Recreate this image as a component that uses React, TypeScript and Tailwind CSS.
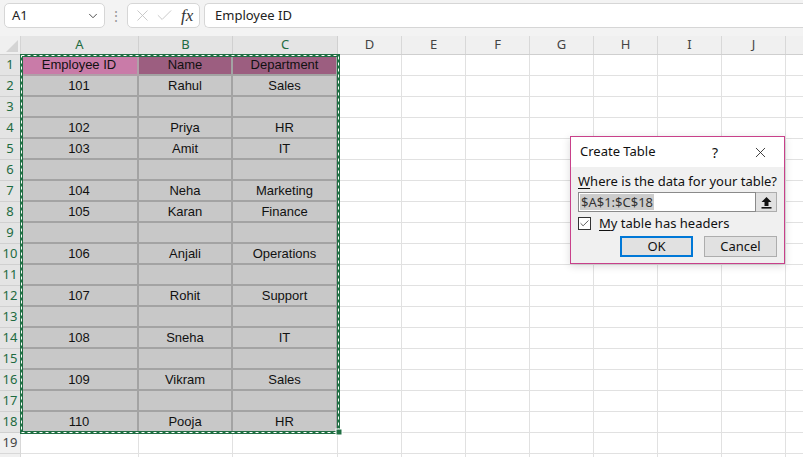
import { ChevronDown, X, Check } from "lucide-react";

type Row = { id?: string; name?: string; dept?: string; header?: boolean };

const rows: Row[] = [
  { id: "Employee ID", name: "Name", dept: "Department", header: true },
  { id: "101", name: "Rahul", dept: "Sales" },
  {},
  { id: "102", name: "Priya", dept: "HR" },
  { id: "103", name: "Amit", dept: "IT" },
  {},
  { id: "104", name: "Neha", dept: "Marketing" },
  { id: "105", name: "Karan", dept: "Finance" },
  {},
  { id: "106", name: "Anjali", dept: "Operations" },
  {},
  { id: "107", name: "Rohit", dept: "Support" },
  {},
  { id: "108", name: "Sneha", dept: "IT" },
  {},
  { id: "109", name: "Vikram", dept: "Sales" },
  {},
  { id: "110", name: "Pooja", dept: "HR" },
  {},
  {},
];

const dataCols = [
  { key: "A", w: "w-[118px]" },
  { key: "B", w: "w-[94px]" },
  { key: "C", w: "w-[105px]" },
];
// K is only partly in view, its letter sits off-screen
const emptyCols = ["D", "E", "F", "G", "H", "I", "J", ""];

const cellFont = { fontFamily: "'Liberation Sans', Arial, sans-serif" };

export default function App() {
  return (
    <div
      className="w-[803px] h-[457px] overflow-hidden bg-white relative text-[#222]"
      style={{ fontFamily: "'Noto Sans', 'Open Sans', sans-serif" }}
    >
      {/* ---------- FORMULA BAR ---------- */}
      <div className="h-[36px] bg-[#f3f3f3] flex items-start pt-[3px] pl-[4px]">
        <div className="w-[101px] h-[25px] bg-white border border-[#d6d6d6] rounded-[5px] flex items-center justify-between pl-[7px] pr-[4px]">
          <span className="text-[13px]">A1</span>
          <ChevronDown size={14} strokeWidth={1.6} className="text-[#444]" />
        </div>
        <div className="w-[22px] h-[25px] flex items-center justify-center text-[#9a9a9a] text-[14px]">⋮</div>
        <div className="w-[73px] h-[25px] bg-white border border-[#d6d6d6] rounded-[5px] flex items-center pl-[5px] gap-[3px]">
          <X size={19} strokeWidth={1.1} className="text-[#c2c2c2]" />
          <Check size={19} strokeWidth={1.1} className="text-[#c2c2c2]" />
          <span
            className="italic text-[17px] text-[#333] ml-[4px] leading-none"
            style={{ fontFamily: "'Liberation Serif', 'DejaVu Serif', serif" }}
          >
            fx
          </span>
        </div>
        <div className="flex-1 h-[25px] ml-[4px] bg-white border border-[#d6d6d6] border-r-0 rounded-l-[5px] flex items-center pl-[10px]">
          <span className="text-[13px]">Employee ID</span>
        </div>
      </div>

      {/* ---------- GRID ---------- */}
      <div className="relative">
        {/* column headers */}
        <div className="flex h-[19px] bg-[#f0f0f0] border-b border-[#cfcfcf]">
          <div className="w-[21px] shrink-0 border-r border-[#d4d4d4] relative">
            <div className="absolute right-[2px] bottom-[2px] w-0 h-0 border-l-[12px] border-l-transparent border-b-[12px] border-b-[#d4d4d4]" />
          </div>
          {dataCols.map((c) => (
            <div
              key={c.key}
              className={`${c.w} shrink-0 bg-[#e4e4e4] border-r border-[#d0d0d0] flex items-center justify-center text-[13px] text-[#1e6b41]`}
            >
              {c.key}
            </div>
          ))}
          {emptyCols.map((c, ci) => (
            <div
              key={ci}
              className="w-[64px] shrink-0 border-r border-[#d8d8d8] flex items-center justify-center text-[13px] text-[#444]"
            >
              {c}
            </div>
          ))}
        </div>

        {/* rows */}
        {rows.map((r, i) => {
          const inData = i < 18;
          const values = [r.id, r.name, r.dept];
          return (
            <div key={i} className="flex h-[21px]">
              <div
                className={`w-[21px] shrink-0 border-r border-b flex items-center justify-center text-[13px] ${
                  inData
                    ? "bg-[#e4e4e4] border-[#d0d0d0] text-[#1e6b41]"
                    : "bg-[#f0f0f0] border-[#d8d8d8] text-[#444]"
                }`}
              >
                {i < 19 ? i + 1 : ""}
              </div>
              {dataCols.map((c, ci) => {
                let bg = "bg-white border-r border-b border-[#e1e1e1]";
                if (inData) {
                  bg = "bg-[#c8c8c8] border-r-2 border-b-2 border-[#a3a3a3]";
                  if (r.header) bg = ci === 0 ? "bg-[#c97ba8] border-r-2 border-b-2 border-[#b0a0a8]" : "bg-[#9c5e80] border-r-2 border-b-2 border-[#a3a3a3]";
                }
                return (
                  <div
                    key={c.key}
                    className={`${c.w} shrink-0 ${bg} flex items-center justify-center text-[13px] text-[#111]`}
                    style={cellFont}
                  >
                    {values[ci] ?? ""}
                  </div>
                );
              })}
              {emptyCols.map((c, ci) => (
                <div key={ci} className="w-[64px] shrink-0 border-r border-b border-[#e1e1e1]" />
              ))}
            </div>
          );
        })}

        {/* marching ants selection A1:C18 */}
        <svg
          className="absolute left-[20px] top-[18px] pointer-events-none"
          width="324"
          height="386"
          viewBox="0 0 324 386"
        >
          <rect x="1.5" y="1.5" width="317" height="377" fill="none" stroke="#1f6e43" strokeWidth="3" />
          <rect x="1.5" y="1.5" width="317" height="377" fill="none" stroke="#ffffff" strokeWidth="1" strokeDasharray="3 3" />
          <rect x="316" y="375" width="6" height="6" fill="#1f6e43" stroke="#ffffff" strokeWidth="1" />
        </svg>
      </div>

      {/* ---------- CREATE TABLE DIALOG ---------- */}
      <div className="absolute left-[570px] top-[136px] w-[215px] h-[128px] border border-[#c8408a] bg-[#f0f0f0] shadow-[0_2px_8px_rgba(0,0,0,0.15)] text-[13px] text-[#111]">
        <div className="h-[30px] bg-white flex items-center pl-[9px]">
          <span>Create Table</span>
          <span className="ml-auto mr-[34px] text-[14px]">?</span>
          <X size={17} strokeWidth={1.2} className="mr-[15px] text-[#222]" />
        </div>
        <div className="px-[7px] pt-[6px]">
          <div className="leading-[16px]">
            <span className="underline underline-offset-2">W</span>here is the data for your table?
          </div>
          <div className="flex mt-[3px] h-[20px]">
            <div className="w-[179px] bg-white border border-[#8a8a8a] flex items-center pl-[1px]">
              <span className="bg-[#cccccc] text-[#333] leading-[16px] px-[1px]">$A$1:$C$18</span>
            </div>
            <div className="w-[21px] bg-[#e1e1e1] border border-[#adadad] border-l-0 flex items-center justify-center">
              <svg width="11" height="13" viewBox="0 0 11 13">
                <path d="M5.5 1 L10.5 6 H7.5 V10 H3.5 V6 H0.5 Z" fill="#111" />
                <rect x="0.5" y="11" width="10" height="1.6" fill="#111" />
              </svg>
            </div>
          </div>
          <div className="flex items-center mt-[5px] h-[13px]">
            <div className="w-[13px] h-[13px] border border-[#333] bg-white flex items-center justify-center">
              <Check size={11} strokeWidth={1.6} className="text-[#222]" />
            </div>
            <span className="ml-[8px]">
              <span className="underline underline-offset-2">M</span>y table has headers
            </span>
          </div>
          <div className="flex mt-[6px] pl-[42px] gap-[11px]">
            <button className="w-[73px] h-[21px] bg-[#e1e1e1] border-2 border-[#0078d7] flex items-center justify-center">
              OK
            </button>
            <button className="w-[73px] h-[21px] bg-[#e1e1e1] border border-[#adadad] flex items-center justify-center">
              Cancel
            </button>
          </div>
        </div>
      </div>
    </div>
  );
}
